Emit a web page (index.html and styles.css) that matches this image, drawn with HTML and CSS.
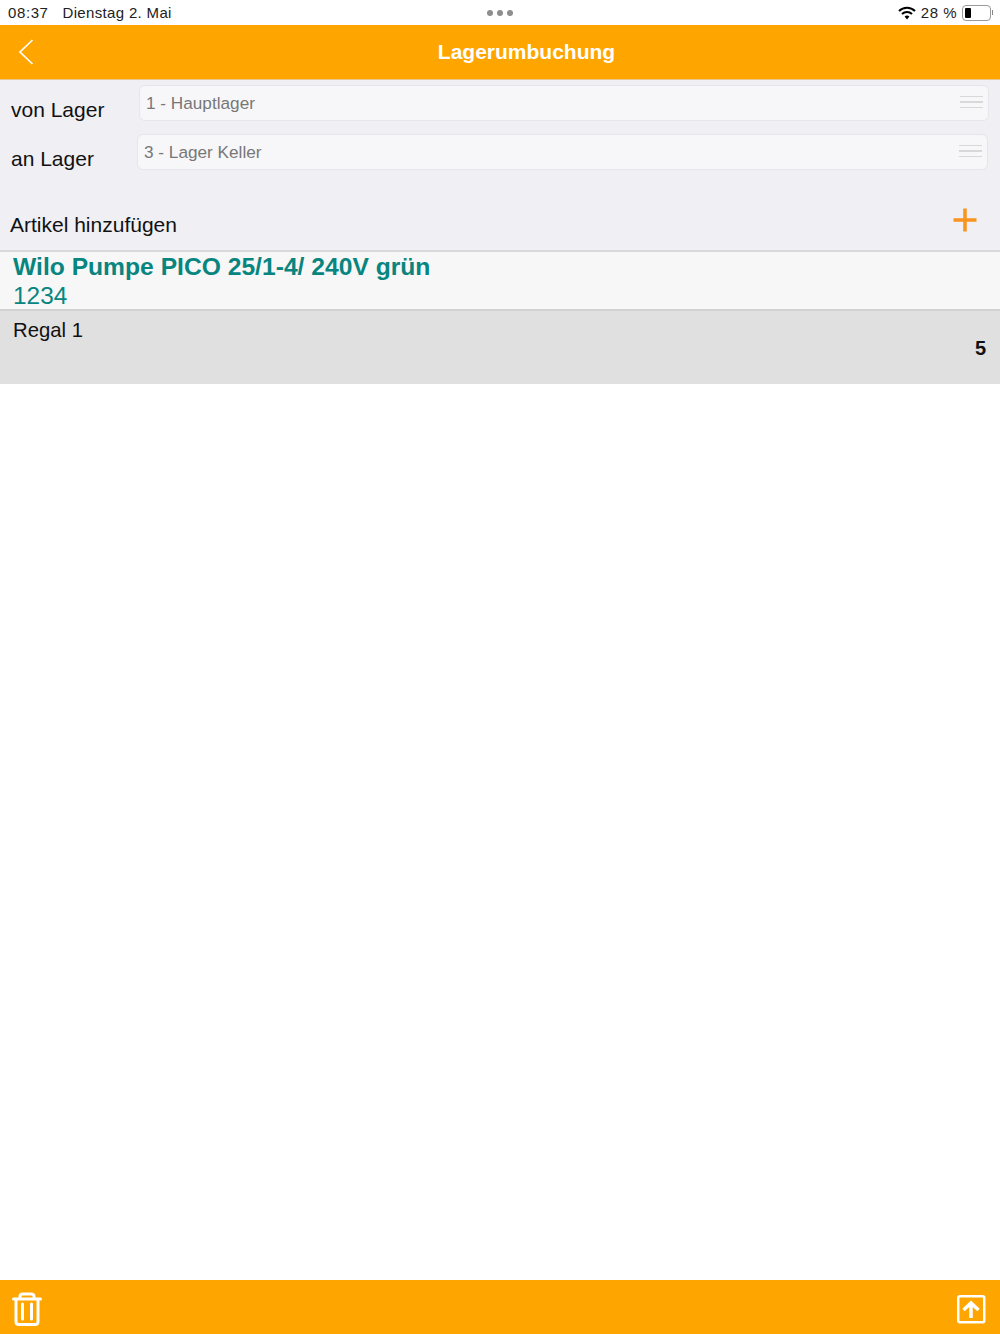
FILE: index.html
```html
<!DOCTYPE html>
<html lang="de">
<head>
  <meta charset="UTF-8">
  <meta name="viewport" content="width=device-width, initial-scale=1.0">
  <title>Lagerumbuchung</title>
  <link rel="stylesheet" href="styles.css">
</head>
<body>

<div class="app">
  <div class="statusbar">
    <div class="status-left">
      <span class="status-time">08:37</span>
      <span class="status-date">Dienstag 2. Mai</span>
    </div>
    <div class="status-dots"><i></i><i></i><i></i></div>
    <div class="status-right">
      <svg class="wifi" width="18" height="14" viewBox="0 0 18 14">
        <path d="M1 5 A11.5 11.5 0 0 1 17 5" fill="none" stroke="#000" stroke-width="2"/>
        <path d="M4 8 A7.2 7.2 0 0 1 14 8" fill="none" stroke="#000" stroke-width="2"/>
        <path d="M6.6 10.6 A3.5 3.5 0 0 1 11.4 10.6 L9 13.4 Z" fill="#000"/>
      </svg>
      <span class="battery-text">28 %</span>
      <div class="battery"><div class="battery-level"></div></div>
      <div class="battery-tip"></div>
    </div>
  </div>

  <div class="navbar">
    <svg class="back" width="16" height="26" viewBox="0 0 16 26">
      <path d="M14.5 1 L2 13 L14.5 25" fill="none" stroke="#fff" stroke-width="1.7"/>
    </svg>
    <h1>Lagerumbuchung</h1>
  </div>

  <form class="lager-form">
    <div class="lager-row">
      <label class="lager-label">von Lager</label>
      <div class="lager-select">
        <span>1 - Hauptlager</span>
        <div class="handle"><i></i><i></i><i></i></div>
      </div>
    </div>
    <div class="lager-row lager-row-second">
      <label class="lager-label">an Lager</label>
      <div class="lager-select">
        <span>3 - Lager Keller</span>
        <div class="handle"><i></i><i></i><i></i></div>
      </div>
    </div>
    <div class="add-row">
      <span>Artikel hinzufügen</span>
      <svg width="24" height="24" viewBox="0 0 24 24">
        <path d="M12 .5 V23.5 M.5 12 H23.5" stroke="#f7931e" stroke-width="3.5"/>
      </svg>
    </div>
  </form>

  <div class="article">
    <div class="article-name">Wilo Pumpe PICO 25/1-4/ 240V grün</div>
    <div class="article-no">1234</div>
  </div>

  <div class="stock">
    <div class="stock-place">Regal 1</div>
    <div class="stock-qty">5</div>
  </div>

  <div class="content"></div>

  <div class="toolbar">
    <svg width="30" height="34" viewBox="0 0 30 34">
      <path d="M1.5 7 H28.5 M8 6.5 V4.5 Q8 2 11 2 H19 Q22 2 22 4.5 V6.5" fill="none" stroke="#fff" stroke-width="3" stroke-linecap="round"/>
      <path d="M4 8 V29.5 Q4 32.5 7 32.5 H23 Q26 32.5 26 29.5 V8" fill="none" stroke="#fff" stroke-width="3"/>
      <path d="M10.5 12 V27 M19.5 12 V27" stroke="#fff" stroke-width="3" stroke-linecap="round"/>
    </svg>
    <svg width="30" height="30" viewBox="0 0 30 30">
      <rect x="2.25" y="2.25" width="26" height="26" rx="1.5" fill="none" stroke="#fff" stroke-width="2.5"/>
      <path d="M15 24 V9.5 M7.5 16 L15 9 L22.5 16" fill="none" stroke="#fff" stroke-width="3.5"/>
    </svg>
  </div>
</div>

</body>
</html>
```

FILE: styles.css
```css
body {
  font-family: "Liberation Sans", Arial, sans-serif;
  margin: 0;
  padding: 0;
  background-color: #fff;
}

.app {
  height: 1334px;
  display: flex;
  flex-direction: column;
  overflow: hidden;
}

.statusbar {
  height: 25px;
  display: flex;
  align-items: center;
  justify-content: space-between;
  padding: 0 8px;
  font-size: 15px;
  color: #222;
  position: relative;
}

.status-left {
  display: flex;
  gap: 14px;
}

.status-time {
  letter-spacing: 0.6px;
}

.status-date {
  letter-spacing: 0.33px;
}

.status-dots {
  display: flex;
  gap: 4px;
  position: absolute;
  left: 487px;
  top: 10px;
}

.status-dots i {
  width: 6px;
  height: 6px;
  border-radius: 50%;
  background-color: #8e8e8e;
}

.status-right {
  display: flex;
  align-items: center;
}

.wifi {
  margin-right: 5px;
}

.battery-text {
  margin-right: 5px;
  letter-spacing: 0.5px;
}

.battery {
  width: 23px;
  height: 10px;
  border: 1px solid #999;
  border-radius: 4px;
  padding: 2px;
}

.battery-level {
  width: 6px;
  height: 10px;
  border-radius: 1px;
  background-color: #000;
}

.battery-tip {
  width: 1px;
  height: 5px;
  margin-left: 1px;
  margin-right: -1px;
  background-color: #888;
}

.navbar {
  height: 54px;
  background-color: #ffa500;
  display: flex;
  align-items: center;
  justify-content: center;
  position: relative;
}

.navbar h1 {
  margin: 0 0 0 53px;
  color: #fff;
  font-size: 21px;
  font-weight: bold;
}

.back {
  position: absolute;
  left: 18px;
  top: 14px;
}

.lager-form {
  height: 171px;
  box-sizing: border-box;
  background-color: #efeff4;
  border-top: 1px solid #e9c78a;
  padding-top: 5px;
  display: flex;
  flex-direction: column;
}

.lager-row {
  display: flex;
  height: 36px;
  margin-bottom: 13px;
}

.lager-label {
  width: 139px;
  flex-shrink: 0;
  box-sizing: border-box;
  padding: 13px 0 0 11px;
  font-size: 21px;
  line-height: 24px;
  color: #111;
}

.lager-row-second .lager-label {
  width: 137px;
}

.lager-select {
  flex: 1;
  margin-right: 11px;
  display: flex;
  align-items: center;
  justify-content: space-between;
  padding: 0 5px 0 6px;
  background-color: #f7f7f9;
  border: 1px solid #e6e6ea;
  border-radius: 6px;
  color: #777;
  font-size: 17.2px;
}

.lager-row-second .lager-select {
  margin-right: 12px;
}

.handle {
  display: flex;
  flex-direction: column;
  gap: 4px;
  width: 23px;
  margin-top: -2px;
}

.handle i {
  height: 1.5px;
  background-color: #d8d8d8;
}

.add-row {
  display: flex;
  justify-content: space-between;
  align-items: flex-start;
  padding: 0 23px 0 10px;
  margin-top: 25px;
  font-size: 21px;
  color: #111;
}

.add-row span {
  margin-top: 5px;
}

.article {
  height: 59px;
  box-sizing: border-box;
  background-color: #f7f7f7;
  border-top: 2px solid #d9d9d9;
  padding: 1px 0 0 13px;
  color: #08857f;
}

.article-name {
  font-size: 24.65px;
  font-weight: bold;
  line-height: 28px;
}

.article-no {
  font-size: 24.4px;
  line-height: 30px;
}

.stock {
  height: 75px;
  box-sizing: border-box;
  background-color: #e0e0e0;
  border-top: 2px solid #d2d2d2;
  padding: 7px 14px 0 13px;
  color: #111;
}

.stock-place {
  font-size: 20.3px;
  line-height: 24px;
}

.stock-qty {
  text-align: right;
  font-size: 20px;
  font-weight: bold;
  line-height: 24px;
  margin-top: -6px;
}

.content {
  flex: 1;
}

.toolbar {
  height: 54px;
  box-sizing: border-box;
  background-color: #ffa500;
  display: flex;
  align-items: center;
  justify-content: space-between;
  padding: 4px 14px 0 12px;
}
```
